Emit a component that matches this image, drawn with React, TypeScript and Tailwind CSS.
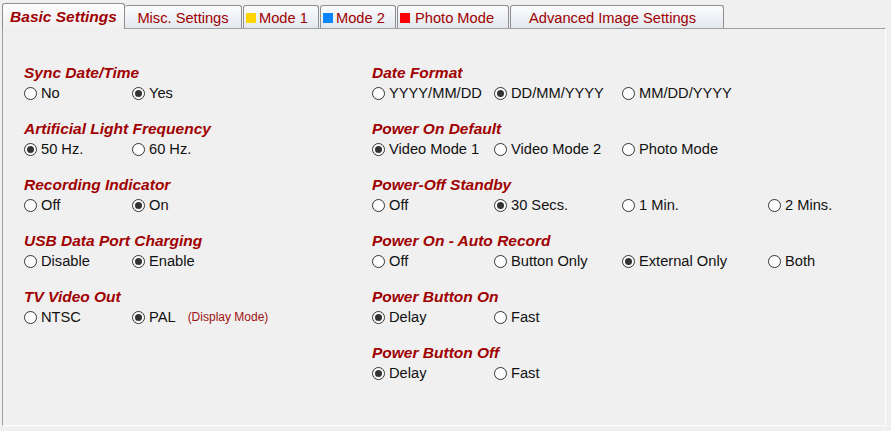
import React from 'react';

type Group = {
  label: string;
  options: string[];
  selected: number;
  note?: string;
};

const leftGroups: Group[] = [
  { label: 'Sync Date/Time', options: ['No', 'Yes'], selected: 1 },
  { label: 'Artificial Light Frequency', options: ['50 Hz.', '60 Hz.'], selected: 0 },
  { label: 'Recording Indicator', options: ['Off', 'On'], selected: 1 },
  { label: 'USB Data Port Charging', options: ['Disable', 'Enable'], selected: 1 },
  { label: 'TV Video Out', options: ['NTSC', 'PAL'], selected: 1, note: '(Display Mode)' },
];

const rightGroups: Group[] = [
  { label: 'Date Format', options: ['YYYY/MM/DD', 'DD/MM/YYYY', 'MM/DD/YYYY'], selected: 1 },
  { label: 'Power On Default', options: ['Video Mode 1', 'Video Mode 2', 'Photo Mode'], selected: 0 },
  { label: 'Power-Off Standby', options: ['Off', '30 Secs.', '1 Min.', '2 Mins.'], selected: 1 },
  { label: 'Power On - Auto Record', options: ['Off', 'Button Only', 'External Only', 'Both'], selected: 2 },
  { label: 'Power Button On', options: ['Delay', 'Fast'], selected: 0 },
  { label: 'Power Button Off', options: ['Delay', 'Fast'], selected: 0 },
];

const Radio: React.FC<{ checked: boolean }> = ({ checked }) => (
  <span className="w-[13px] h-[13px] rounded-full border border-[#333] bg-white flex items-center justify-center shrink-0">
    {checked && <span className="w-[7px] h-[7px] rounded-full bg-[#333]" />}
  </span>
);

const Option: React.FC<{ text: string; checked: boolean; note?: string }> = ({ text, checked, note }) => (
  <div className="flex items-center gap-[4px] h-[20px] text-[14.67px] leading-[20px] text-[#111] whitespace-nowrap">
    <Radio checked={checked} />
    <span>{text}</span>
    {note && <span className="ml-[8px] text-[12px] text-[#a01010]">{note}</span>}
  </div>
);

const SettingGroup: React.FC<{ group: Group; cols: string }> = ({ group, cols }) => (
  <div className="mb-[16px]">
    <div className="h-[20px] leading-[20px] text-[15.5px] font-bold italic text-[#a00000] whitespace-nowrap">
      {group.label}
    </div>
    <div className={`grid ${cols}`}>
      {group.options.map((opt, i) => (
        <Option
          key={opt + i}
          text={opt}
          checked={group.selected === i}
          note={i === group.options.length - 1 ? group.note : undefined}
        />
      ))}
    </div>
  </div>
);

const tabBase =
  'h-[23px] flex items-center pt-[1px] border border-b-0 border-[#8f8f8f] rounded-t-[3px] bg-gradient-to-b from-[#fbfcfd] to-[#e3e8ee] text-[14.67px] text-[#a00000] whitespace-nowrap';

export default function App() {
  return (
    <div className="w-[891px] h-[431px] bg-[#f0f0f0] font-['Liberation_Sans',Arial,sans-serif] overflow-hidden">
      {/* Tab strip */}
      <div className="flex items-end h-[28px] pl-[2px]">
        <div className="relative z-10 -mb-px h-[26px] w-[123px] flex items-center justify-center border border-b-0 border-[#8f8f8f] rounded-t-[3px] bg-gradient-to-b from-[#fdfdfd] to-[#f0f0f0] text-[15.5px] font-bold italic text-[#a00000]">
          Basic Settings
        </div>
        <div className={`${tabBase} w-[117px] justify-center border-l-0`}>Misc. Settings</div>
        <div className={`${tabBase} w-[76px] ml-[1px] pl-[2px] gap-[3px]`}>
          <span className="w-[10px] h-[10px] bg-[#ffd400]" />
          Mode 1
        </div>
        <div className={`${tabBase} w-[76px] ml-[1px] pl-[2px] gap-[3px]`}>
          <span className="w-[10px] h-[10px] bg-[#0a84ff]" />
          Mode 2
        </div>
        <div className={`${tabBase} w-[112px] ml-[1px] pl-[2px] gap-[5px]`}>
          <span className="w-[10px] h-[10px] bg-[#ff0000]" />
          Photo Mode
        </div>
        <div className={`${tabBase} w-[214px] ml-[1px] pl-[18px]`}>Advanced Image Settings</div>
      </div>

      {/* Panel */}
      <div className="ml-[2px] w-[884px] h-[398px] border-l border-t border-[#a0a0a0] border-r-white border-b-white border-r border-b flex pt-[34px] pl-[21px]">
        <div className="w-[348px]">
          {leftGroups.map((g) => (
            <SettingGroup key={g.label} group={g} cols="grid-cols-[108px_auto]" />
          ))}
        </div>
        <div className="flex-1">
          {rightGroups.map((g) => (
            <SettingGroup key={g.label} group={g} cols="grid-cols-[122px_128px_146px_auto]" />
          ))}
        </div>
      </div>
    </div>
  );
}
